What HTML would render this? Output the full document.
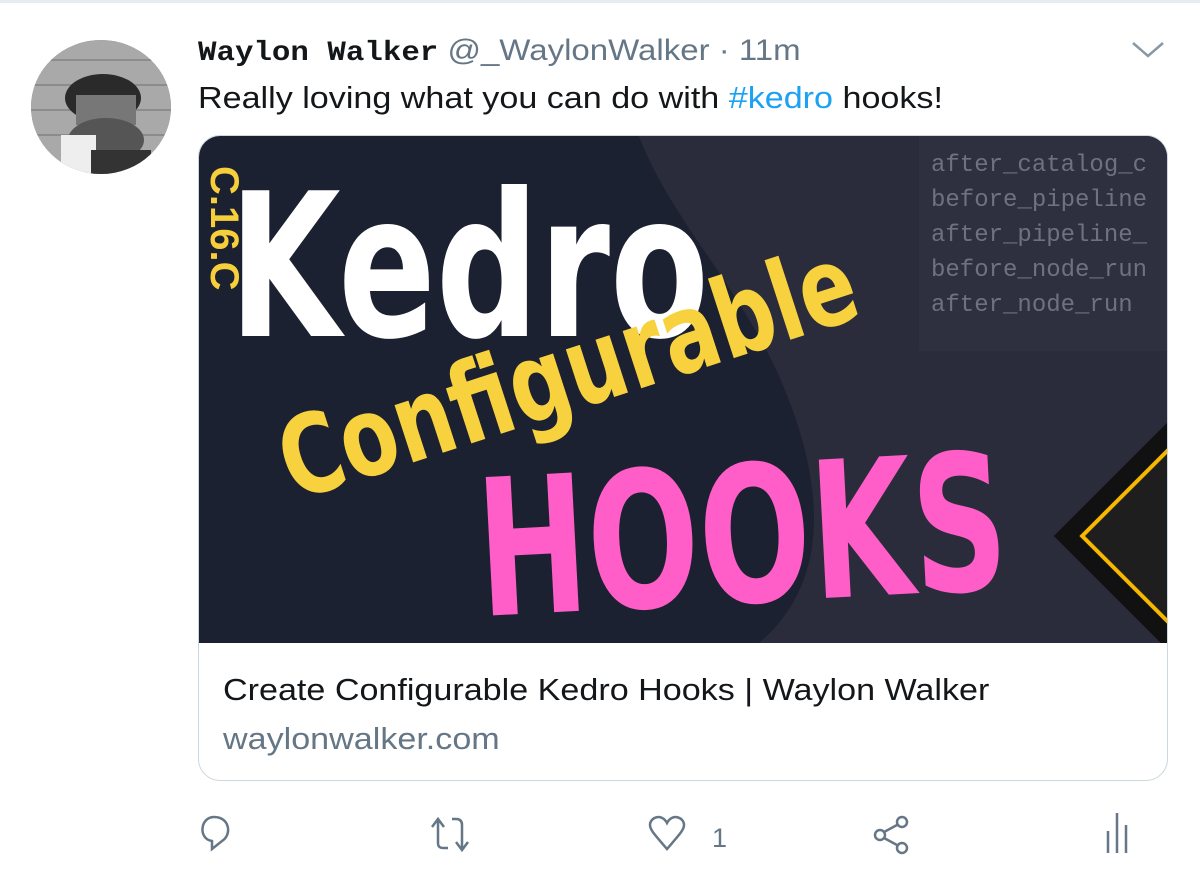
<!DOCTYPE html>
<html><head><meta charset="utf-8"><style>
body{margin:0;width:1200px;height:884px;background:#fff;font-family:"Liberation Sans",Roboto,sans-serif;position:relative;overflow:hidden}
.top{position:absolute;left:0;top:0;width:1200px;height:3px;background:#e6ecf0}
.av{position:absolute;left:31px;top:40px;width:140px;height:134px;border-radius:50%;overflow:hidden;background:#8a8a8a}
.name{position:absolute;left:198px;top:34px;font-size:30px;white-space:nowrap;transform:scaleX(1.1);transform-origin:0 0}
.name b{font-family:"Liberation Mono",monospace;font-weight:bold;color:#14171a;font-size:28px}
.name span{color:#657786}
.txt{position:absolute;left:198px;top:80px;font-size:31px;color:#14171a;white-space:nowrap;transform:scaleX(1.1);transform-origin:0 0}
.txt a{color:#1da1f2}
.card{position:absolute;left:198px;top:135px;width:968px;height:644px;border:1px solid #ccd6dd;border-radius:22px;overflow:hidden}
.t1{position:absolute;left:24px;top:536px;font-size:31px;color:#14171a;white-space:nowrap;transform:scaleX(1.1);transform-origin:0 0}
.t2{position:absolute;left:24px;top:585px;font-size:31px;color:#657786;white-space:nowrap;transform:scaleX(1.1);transform-origin:0 0}
</style></head><body>
<div class="top"></div>
<div class="av"><svg width="140" height="134">
<rect width="140" height="134" fill="#a9a9a9"/>
<g stroke="#8c8c8c" stroke-width="2"><line x1="0" y1="20" x2="140" y2="20"/><line x1="0" y1="45" x2="140" y2="45"/><line x1="0" y1="70" x2="140" y2="70"/><line x1="0" y1="95" x2="140" y2="95"/></g>
<ellipse cx="72" cy="58" rx="38" ry="24" fill="#2a2a2a"/>
<rect x="45" y="55" width="60" height="30" fill="#777"/>
<ellipse cx="75" cy="100" rx="38" ry="22" fill="#555"/>
<rect x="30" y="95" width="35" height="39" fill="#eee"/>
<rect x="60" y="110" width="60" height="24" fill="#333"/>
</svg></div>
<div class="name"><b>Waylon Walker</b> <span>@_WaylonWalker · 11m</span></div>
<svg style="position:absolute;left:1130px;top:40px" width="36" height="20"><path d="M3 3 L18 16 L33 3" fill="none" stroke="#8899a6" stroke-width="2.5"/></svg>
<div class="txt">Really loving what you can do with <a>#kedro</a> hooks!</div>
<div class="card">
<svg width="968" height="507" style="display:block">
<rect width="968" height="507" fill="#1c2131"/>
<path d="M440 0 H968 V507 H560 C640 440 620 330 580 240 C540 150 470 80 440 0Z" fill="#2b2c3b"/>
<rect x="720" y="0" width="248" height="215" fill="#303141" opacity="0.8"/>
<g font-family="Liberation Mono,monospace" font-size="24" fill="#6f7080">
<text x="732" y="35">after_catalog_c</text><text x="732" y="70">before_pipeline</text><text x="732" y="105">after_pipeline_</text><text x="732" y="140">before_node_run</text><text x="732" y="175">after_node_run</text></g>
<g transform="translate(968,400) rotate(45)"><rect x="-80" y="-80" width="160" height="160" fill="#111"/><rect x="-60" y="-60" width="120" height="120" fill="#1e1e1e" stroke="#f5b700" stroke-width="4"/></g>
<text transform="translate(12,30) rotate(90)" font-family="Liberation Sans" font-weight="bold" font-size="40" fill="#f6cf3b">C.16.C</text>
<text x="30" y="200" font-family="DejaVu Sans" font-weight="bold" font-size="200" fill="#fff" textLength="480" lengthAdjust="spacingAndGlyphs">Kedro</text>
<text transform="translate(95,365) rotate(-18)" font-family="DejaVu Sans" font-weight="bold" font-size="110" fill="#f8d23e" textLength="600" lengthAdjust="spacingAndGlyphs">Configurable</text>
<text transform="translate(282,480) rotate(-3)" font-family="DejaVu Sans" font-weight="bold" font-size="190" fill="#ff5dc8" textLength="530" lengthAdjust="spacingAndGlyphs">HOOKS</text>
</svg>
<div class="t1">Create Configurable Kedro Hooks | Waylon Walker</div>
<div class="t2">waylonwalker.com</div>
</div>
<svg style="position:absolute;left:190px;top:805px" width="1010" height="60" fill="none" stroke="#657786" stroke-width="2.5">
<path d="M22 44 V36 C8 34 10 12 24 12 C40 12 42 30 32 36 Z"/>
<path d="M248 16 V38 C248 42 250 43 254 43 H258 M242 22 L248 14 L254 22 M262 14 H266 C270 14 272 16 272 20 V44 M266 37 L272 45 L278 37"/>
<path d="M477 44 C465 30 460 25 460 20 C460 12 472 8 477 18 C482 8 494 12 494 20 C494 25 489 30 477 44Z"/>
<text x="522" y="42" font-family="Liberation Sans" font-size="27" fill="#657786" stroke="none">1</text>
<circle cx="690" cy="30" r="5"/><circle cx="712" cy="17" r="5"/><circle cx="712" cy="43" r="5"/><path d="M694 27 L707 20 M694 33 L707 40"/>
<path d="M918 48 V26 M927 48 V8 M936 48 V20"/>
</svg>
</body></html>
